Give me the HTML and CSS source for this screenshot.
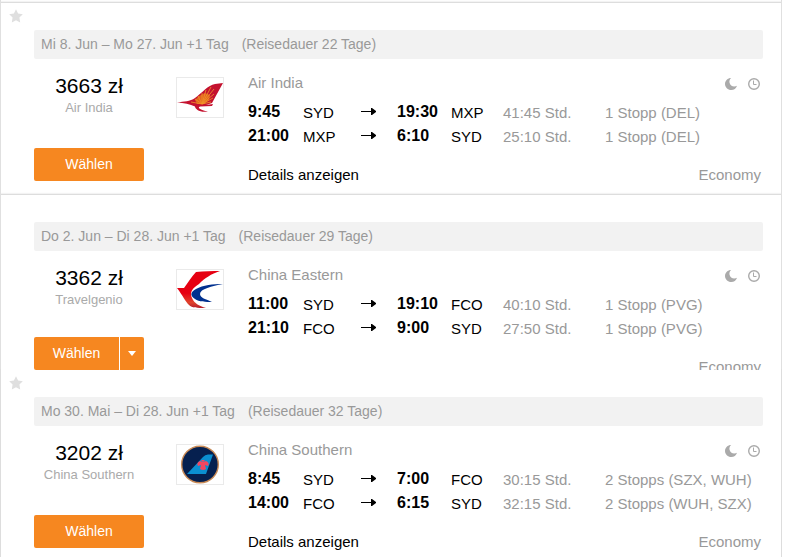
FILE: index.html
```html
<!DOCTYPE html>
<html lang="de">
<head>
  <meta charset="UTF-8">
  <meta name="viewport" content="width=device-width, initial-scale=1.0">
  <title>Flugergebnisse</title>
  <link rel="stylesheet" href="styles.css">
</head>
<body>
  <!-- Shared icons -->
  <svg width="0" height="0" class="sprite" aria-hidden="true">
    <symbol id="star" viewBox="0 0 14 14"><path d="M7 0.3l2.1 4.3 4.7.7-3.4 3.3.8 4.9L7 11.2l-4.2 2.3.8-4.9L.2 5.3l4.7-.7z"/></symbol>
    <symbol id="moon" viewBox="0 0 12 12"><path d="M6.200 0C4.800 1 4.200 2.600 4.500 4.500c.5 2.500 2.500 4 4.700 4 1.100 0 2-.3 2.800-.8C11.200 10.400 9 12 6.300 12 2.800 12 0 9.300 0 6 0 2.700 2.700 0 6.200 0z"/></symbol>
    <symbol id="clock" viewBox="0 0 12 12"><circle cx="6" cy="6" r="5.3" fill="none" stroke="currentColor" stroke-width="1.4"/><path d="M5.500 2.500V6.500H8.500" fill="none" stroke="currentColor" stroke-width="1"/></symbol>
    <symbol id="arrow" viewBox="0 0 15 8"><path d="M0 3h10V0h1l4 3v1l-4 3h-1V4H0z"/></symbol>
  </svg>

  <main class="results">
    <article class="result">
      <button class="star" aria-label="Merken"><svg width="14" height="14"><use href="#star"/></svg></button>
      <h2 class="dates"><span>Mi 8. Jun – Mo 27. Jun +1 Tag</span><span>(Reisedauer 22 Tage)</span></h2>
      <div class="result-body">
        <div class="booking">
          <p class="price">3663 zł</p>
          <p class="provider">Air India</p>
          <div class="actions"><button class="select-btn">Wählen</button></div>
        </div>
        <div class="logo">
          <svg viewBox="0 0 46 39" width="46" height="39" aria-label="Air India" role="img">
            <path d="M0 24.500C7 23.500 13 23.500 18 20C25 15 31 7 38 6L46 5L35 25L29 27L36 26L35 28L23 28.500C20 29.500 23 32 31 33.500C23 35 18 31 18 28.500C13 26 7 25 0 24.500z" fill="#c4122f"/>
            <path d="M18 22L22 18L28 15L33 17L32 22L27 26L20 26z" fill="#ea7a1c" opacity=".8"/>
            <g stroke="#f0942a" stroke-width=".8">
              <path d="M25 26L14 24M25 26L18 21M25 26L21 18M25 26L25 15M25 26L29 12M25 26L34 9M25 26L37 11M25 26L37 16M25 26L36 20M25 26L34 24"/>
            </g>
          </svg>
        </div>
        <div class="details">
          <div class="airline">
            <span>Air India</span>
            <span class="flags"><svg width="12" height="12"><use href="#moon"/></svg><svg width="12" height="12"><use href="#clock"/></svg></span>
          </div>
          <table class="legs">
            <tr><td class="time">9:45</td><td class="code">SYD</td><td class="arrow"><svg width="15" height="8"><use href="#arrow"/></svg></td><td class="time arrive">19:30</td><td class="code to">MXP</td><td class="duration">41:45 Std.</td><td class="stops">1 Stopp (DEL)</td></tr>
            <tr><td class="time">21:00</td><td class="code">MXP</td><td class="arrow"><svg width="15" height="8"><use href="#arrow"/></svg></td><td class="time arrive">6:10</td><td class="code to">SYD</td><td class="duration">25:10 Std.</td><td class="stops">1 Stopp (DEL)</td></tr>
          </table>
          <div class="more"><a href="#">Details anzeigen</a><span class="cabin">Economy</span></div>
        </div>
      </div>
    </article>

    <article class="result collapsed">
      <h2 class="dates"><span>Do 2. Jun – Di 28. Jun +1 Tag</span><span>(Reisedauer 29 Tage)</span></h2>
      <div class="result-body">
        <div class="booking">
          <p class="price">3362 zł</p>
          <p class="provider">Travelgenio</p>
          <div class="actions">
            <button class="select-btn">Wählen</button>
            <button class="toggle-btn" aria-label="Weitere Anbieter"><svg width="8" height="5" viewBox="0 0 8 5"><path d="M0 0h8L4 5z"/></svg></button>
          </div>
        </div>
        <div class="logo">
          <svg viewBox="0 0 46 39" width="46" height="39" aria-label="China Eastern" role="img">
            <defs><linearGradient id="red" x1="0" y1="0" x2="0" y2="1"><stop offset=".6" stop-color="#e60012"/><stop offset=".85" stop-color="#e0432c"/><stop offset="1" stop-color="#b5202c"/></linearGradient></defs>
            <path d="M19 2C27 1 36 1 43 1C34 4 28 8 22 14C16 18 12 22 15 28C17 33 22 36 29 38C20 38 15 38 12 35C8 31 6 26 0 18L7 18C11 13 14 7 19 2z" fill="url(#red)"/>
            <path d="M46 14C36 14 26 15 19 19C13 22 13 26 18 29C22 32 29 32 35 32C29 29 23 28 23 24C23 19 35 16 46 14z" fill="#00308f"/>
          </svg>
        </div>
        <div class="details">
          <div class="airline">
            <span>China Eastern</span>
            <span class="flags"><svg width="12" height="12"><use href="#moon"/></svg><svg width="12" height="12"><use href="#clock"/></svg></span>
          </div>
          <table class="legs">
            <tr><td class="time">11:00</td><td class="code">SYD</td><td class="arrow"><svg width="15" height="8"><use href="#arrow"/></svg></td><td class="time arrive">19:10</td><td class="code to">FCO</td><td class="duration">40:10 Std.</td><td class="stops">1 Stopp (PVG)</td></tr>
            <tr><td class="time">21:10</td><td class="code">FCO</td><td class="arrow"><svg width="15" height="8"><use href="#arrow"/></svg></td><td class="time arrive">9:00</td><td class="code to">SYD</td><td class="duration">27:50 Std.</td><td class="stops">1 Stopp (PVG)</td></tr>
          </table>
          <div class="more"><span class="cabin">Economy</span></div>
        </div>
      </div>
    </article>

    <article class="result">
      <button class="star" aria-label="Merken"><svg width="14" height="14"><use href="#star"/></svg></button>
      <h2 class="dates"><span>Mo 30. Mai – Di 28. Jun +1 Tag</span><span>(Reisedauer 32 Tage)</span></h2>
      <div class="result-body">
        <div class="booking">
          <p class="price">3202 zł</p>
          <p class="provider">China Southern</p>
          <div class="actions"><button class="select-btn">Wählen</button></div>
        </div>
        <div class="logo">
          <svg viewBox="0 0 46 39" width="46" height="39" aria-label="China Southern" role="img">
            <circle cx="23" cy="19.500" r="18.300" fill="#06204f" stroke="#c98a55" stroke-width="1.400"/>
            <path d="M10 29L26 12Q28 9.500 31 9.500H36L29 29z" fill="#0b8fd0"/>
            <path d="M24 15L26 17L23 16Q19 18 21 21L24 20L23 24Q26 26 29 24L28 20L31 21Q33 18 29 16L26 17L28 15z" fill="#f4465f"/>
          </svg>
        </div>
        <div class="details">
          <div class="airline">
            <span>China Southern</span>
            <span class="flags"><svg width="12" height="12"><use href="#moon"/></svg><svg width="12" height="12"><use href="#clock"/></svg></span>
          </div>
          <table class="legs">
            <tr><td class="time">8:45</td><td class="code">SYD</td><td class="arrow"><svg width="15" height="8"><use href="#arrow"/></svg></td><td class="time arrive">7:00</td><td class="code to">FCO</td><td class="duration">30:15 Std.</td><td class="stops">2 Stopps (SZX, WUH)</td></tr>
            <tr><td class="time">14:00</td><td class="code">FCO</td><td class="arrow"><svg width="15" height="8"><use href="#arrow"/></svg></td><td class="time arrive">6:15</td><td class="code to">SYD</td><td class="duration">32:15 Std.</td><td class="stops">2 Stopps (WUH, SZX)</td></tr>
          </table>
          <div class="more"><a href="#">Details anzeigen</a><span class="cabin">Economy</span></div>
        </div>
      </div>
    </article>
  </main>
</body>
</html>
```
FILE: styles.css
```css
* {
  margin: 0;
  padding: 0;
  box-sizing: border-box;
}

body {
  font-family: "Liberation Sans", Arial, sans-serif;
  font-size: 15px;
  line-height: 20px;
  color: #000;
  background: #fff;
}

button {
  font-family: inherit;
  border: none;
  cursor: pointer;
}

svg {
  display: block;
  fill: currentColor;
}

.sprite {
  position: absolute;
}

.results {
  min-height: 100vh;
  margin-right: 7px;
  padding-top: 2px;
  border-left: 1px solid #ddd;
  border-right: 1px solid #ddd;
}

.result {
  position: relative;
  padding: 27px 18px 9px 33px;
  border-top: 1px solid #ddd;
  box-shadow: 0 -1px 1px #f3f3f3;
}

/* Card without the details row, the next one follows directly */
.collapsed {
  max-height: 176px;
  padding-bottom: 0;
  overflow: hidden;
}

.collapsed + .result {
  border-top: none;
  box-shadow: none;
  padding-bottom: 0;
}

.star {
  position: absolute;
  top: 6px;
  left: 8px;
  background: none;
  color: #dfdfdf;
}

.dates {
  display: flex;
  gap: 13px;
  padding: 0 7px;
  font-size: 14px;
  font-weight: normal;
  line-height: 29px;
  color: #999;
  background: #f2f2f2;
  border-radius: 2px;
}

.result-body {
  display: flex;
  align-items: flex-start;
  padding-top: 15px;
}

.booking {
  width: 110px;
  text-align: center;
}

.price {
  font-size: 21px;
  line-height: 24px;
}

.provider {
  font-size: 13px;
  color: #aaa;
}

.actions {
  display: flex;
  gap: 1px;
  margin-top: 30px;
  border-radius: 2px;
  overflow: hidden;
}

.collapsed .actions {
  margin-top: 27px;
}

.select-btn,
.toggle-btn {
  height: 33px;
  font-size: 14px;
  color: #fff;
  background: #f68720;
}

.select-btn {
  flex: 1;
  padding-bottom: 2px;
}

.toggle-btn {
  display: flex;
  align-items: center;
  justify-content: center;
  width: 24px;
}

.select-btn:hover,
.toggle-btn:hover {
  background: #e67812;
}

.logo {
  margin: 3px 24px 0 32px;
  border: 1px solid #eaeaea;
}

.details {
  flex: 1;
}

.airline,
.more {
  display: flex;
  justify-content: space-between;
  color: #999;
}

.airline {
  line-height: 18px;
}

.flags {
  display: flex;
  align-items: center;
  gap: 11px;
  height: 20px;
  padding-right: 3px;
  color: #aaa;
}

.legs {
  width: 100%;
  margin-top: 6px;
  table-layout: fixed;
  border-collapse: collapse;
}

.legs td {
  height: 24px;
  padding-top: 2px;
  white-space: nowrap;
  vertical-align: middle;
}

.legs .time {
  width: 55px;
  padding-top: 0;
  font-size: 16px;
  font-weight: bold;
}

.legs .code {
  width: 58px;
}

.legs .arrow {
  width: 36px;
  padding-top: 0;
}

.legs .arrive {
  width: 54px;
}

.legs .to {
  width: 52px;
}

.legs .duration {
  width: 102px;
  color: #999;
}

.legs .stops {
  color: #999;
}

.more {
  margin-top: 17px;
}

.more a {
  color: #000;
  text-decoration: none;
}

.more a:hover {
  text-decoration: underline;
}

.cabin {
  margin-left: auto;
  padding-right: 2px;
}
```
